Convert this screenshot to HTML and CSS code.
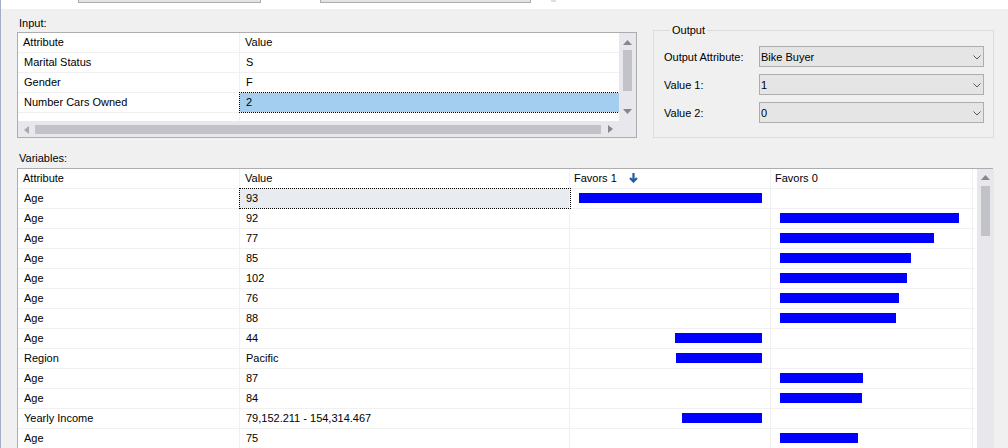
FILE: index.html
```html
<!DOCTYPE html>
<html>
<head>
<meta charset="utf-8">
<link rel="stylesheet" href="styles.css">
</head>
<body>
<div class="window">
  <div class="topbar">
    <div class="stub stub-a"></div>
    <div class="stub stub-b"></div>
    <div class="stub-c"></div>
  </div>

  <div class="upper">
    <section class="input-section">
      <div class="caption">Input:</div>
      <div class="grid-box input-box">
        <div class="grid-body">
          <div class="row head"><div class="cell c-attr">Attribute</div><div class="cell c-val">Value</div></div>
          <div class="row"><div class="cell c-attr">Marital Status</div><div class="cell c-val">S</div></div>
          <div class="row"><div class="cell c-attr">Gender</div><div class="cell c-val">F</div></div>
          <div class="row"><div class="cell c-attr">Number Cars Owned</div><div class="cell c-val sel-blue">2</div></div>
          <div class="row filler"><div class="cell c-attr"></div><div class="cell c-val"></div></div>
        </div>
        <div class="vscroll">
          <svg class="arr-up" width="9" height="5" viewBox="0 0 9 5"><polygon points="0,5 4.5,0 9,5" fill="#86868f"/></svg>
          <div class="thumb v-thumb-in"></div>
          <svg class="arr-down" width="9" height="5" viewBox="0 0 9 5"><polygon points="0,0 9,0 4.5,5" fill="#86868f"/></svg>
        </div>
        <div class="hscroll">
          <svg class="arr-left" width="5" height="8" viewBox="0 0 5 8"><polygon points="5,0 5,8 0,4" fill="#a8a8b0"/></svg>
          <div class="thumb h-thumb"></div>
          <svg class="arr-right" width="5" height="8" viewBox="0 0 5 8"><polygon points="0,0 0,8 5,4" fill="#86868f"/></svg>
        </div>
      </div>
    </section>

    <fieldset class="output">
      <legend>Output</legend>
      <div class="out-row">
        <div class="out-label">Output Attribute:</div>
        <div class="combo"><span>Bike Buyer</span><svg width="8" height="5" viewBox="0 0 8 5"><polyline points="0.5,0.5 4,4 7.5,0.5" fill="none" stroke="#5a5a5a" stroke-width="1"/></svg></div>
      </div>
      <div class="out-row">
        <div class="out-label">Value 1:</div>
        <div class="combo"><span>1</span><svg width="8" height="5" viewBox="0 0 8 5"><polyline points="0.5,0.5 4,4 7.5,0.5" fill="none" stroke="#5a5a5a" stroke-width="1"/></svg></div>
      </div>
      <div class="out-row">
        <div class="out-label">Value 2:</div>
        <div class="combo"><span>0</span><svg width="8" height="5" viewBox="0 0 8 5"><polyline points="0.5,0.5 4,4 7.5,0.5" fill="none" stroke="#5a5a5a" stroke-width="1"/></svg></div>
      </div>
    </fieldset>
  </div>

  <section class="variables">
    <div class="caption">Variables:</div>
    <div class="grid-box var-box">
      <div class="var-body">
        <div class="row head">
          <div class="cell c-attr">Attribute</div>
          <div class="cell c-val">Value</div>
          <div class="cell c-f1 hdr-f1">Favors 1<svg class="sort-ico" width="9" height="10" viewBox="0 0 9 10"><path d="M4.5 0 V8.5 M1 5 L4.5 8.5 L8 5" fill="none" stroke="#1d5ba6" stroke-width="2.2"/></svg></div>
          <div class="cell c-f0">Favors 0</div>
        </div>
        <div class="row"><div class="cell c-attr">Age</div><div class="cell c-val sel-gray">93</div><div class="cell c-f1"><div class="bar" style="width:183px"></div></div><div class="cell c-f0"></div></div>
        <div class="row"><div class="cell c-attr">Age</div><div class="cell c-val">92</div><div class="cell c-f1"></div><div class="cell c-f0"><div class="bar" style="width:179px"></div></div></div>
        <div class="row"><div class="cell c-attr">Age</div><div class="cell c-val">77</div><div class="cell c-f1"></div><div class="cell c-f0"><div class="bar" style="width:154px"></div></div></div>
        <div class="row"><div class="cell c-attr">Age</div><div class="cell c-val">85</div><div class="cell c-f1"></div><div class="cell c-f0"><div class="bar" style="width:131px"></div></div></div>
        <div class="row"><div class="cell c-attr">Age</div><div class="cell c-val">102</div><div class="cell c-f1"></div><div class="cell c-f0"><div class="bar" style="width:127px"></div></div></div>
        <div class="row"><div class="cell c-attr">Age</div><div class="cell c-val">76</div><div class="cell c-f1"></div><div class="cell c-f0"><div class="bar" style="width:119px"></div></div></div>
        <div class="row"><div class="cell c-attr">Age</div><div class="cell c-val">88</div><div class="cell c-f1"></div><div class="cell c-f0"><div class="bar" style="width:116px"></div></div></div>
        <div class="row"><div class="cell c-attr">Age</div><div class="cell c-val">44</div><div class="cell c-f1"><div class="bar" style="width:87px"></div></div><div class="cell c-f0"></div></div>
        <div class="row"><div class="cell c-attr">Region</div><div class="cell c-val">Pacific</div><div class="cell c-f1"><div class="bar" style="width:86px"></div></div><div class="cell c-f0"></div></div>
        <div class="row"><div class="cell c-attr">Age</div><div class="cell c-val">87</div><div class="cell c-f1"></div><div class="cell c-f0"><div class="bar" style="width:83px"></div></div></div>
        <div class="row"><div class="cell c-attr">Age</div><div class="cell c-val">84</div><div class="cell c-f1"></div><div class="cell c-f0"><div class="bar" style="width:82px"></div></div></div>
        <div class="row"><div class="cell c-attr">Yearly Income</div><div class="cell c-val">79,152.211 - 154,314.467</div><div class="cell c-f1"><div class="bar" style="width:80px"></div></div><div class="cell c-f0"></div></div>
        <div class="row"><div class="cell c-attr">Age</div><div class="cell c-val">75</div><div class="cell c-f1"></div><div class="cell c-f0"><div class="bar" style="width:78px"></div></div></div>
      </div>
      <div class="var-scroll">
        <svg class="arr-up2" width="9" height="5" viewBox="0 0 9 5"><polygon points="0,5 4.5,0 9,5" fill="#86868f"/></svg>
        <div class="thumb v-thumb-var"></div>
      </div>
    </div>
  </section>
</div>
</body>
</html>
```

FILE: styles.css
```css
* { box-sizing: border-box; }
html, body { margin: 0; padding: 0; }
body {
  width: 1008px;
  height: 448px;
  overflow: hidden;
  background: #f0f0f0;
  font-family: "Liberation Sans", Arial, sans-serif;
  font-size: 11px;
  color: #000;
}
.window {
  height: 448px;
  border-left: 1px solid #a5adc9;
  overflow: hidden;
}

/* top strip */
.topbar {
  height: 9px;
  background: #fff;
  display: flex;
  align-items: flex-start;
  padding-left: 77px;
}
.stub {
  height: 3px;
  border: 1px solid #adadad;
  border-top: none;
  background: #e3e3e3;
}
.stub-a { width: 183px; }
.stub-b { width: 211px; margin-left: 59px; }
.stub-c { width: 5px; height: 2px; background: #dedede; margin-left: 20px; }

/* upper area */
.upper {
  display: flex;
  align-items: flex-start;
  padding-left: 16px;
}
.input-section {
  width: 620px;
  padding-top: 7px;
}
.caption {
  line-height: 15px;
  padding-left: 2px;
}
.input-section .caption { margin-bottom: 1px; }

.grid-box {
  border: 1px solid #adadad;
  background: #fff;
}
.input-box {
  display: grid;
  grid-template-columns: 1fr 17px;
  grid-template-rows: 88px 16px;
  height: 106px;
}
.input-box .grid-body { grid-column: 1; grid-row: 1; overflow: hidden; }
.input-box .vscroll { grid-column: 2; grid-row: 1 / 3; }
.input-box .hscroll { grid-column: 1; grid-row: 2; }

.row {
  display: flex;
  height: 20px;
  border-bottom: 1px solid #f0f0f0;
  line-height: 19px;
}
.row.filler { height: 8px; border-bottom: none; }
.cell {
  padding-left: 6px;
  white-space: nowrap;
  overflow: visible;
}
.head .cell { padding-left: 5px; }
.c-attr { width: 222px; flex: none; border-right: 1px solid #f0f0f0; }
.input-box .c-val { flex: 1; }

.sel-blue {
  background: #a4cef0;
  outline: 1px dotted #000;
}
.sel-gray {
  background: #e8ecf0;
  outline: 1px dotted #000;
}

/* scrollbars */
.vscroll, .hscroll, .var-scroll { background: #e8e8ec; }
.vscroll {
  display: flex;
  flex-direction: column;
  padding-left: 4px;
}
.thumb { background: #c2c3c9; }
.arr-up { display: block; margin-top: 7px; }
.v-thumb-in { width: 9px; height: 41px; margin-top: 5px; }
.arr-down { display: block; margin-top: 18px; }

.hscroll {
  display: flex;
  align-items: flex-start;
  padding-left: 6px;
}
.arr-left { display: block; margin-top: 5px; }
.h-thumb { width: 566px; height: 9px; margin-top: 4px; margin-left: 6px; }
.arr-right { display: block; margin-top: 4px; margin-left: 7px; }

/* output group */
.output {
  margin: 15px 0 0 16px;
  width: 341px;
  min-width: 0;
  border: 1px solid #dcdcdc;
  padding: 9px 9px 14px 10px;
}
.output legend {
  padding: 0 2px;
  margin-left: 6px;
  line-height: 13px;
}
.out-row {
  display: flex;
  height: 21px;
}
.out-row + .out-row { margin-top: 7px; }
.out-label {
  width: 95px;
  line-height: 22px;
}
.combo {
  width: 225px;
  height: 21px;
  border: 1px solid #adadad;
  background: #e5e5e5;
  display: flex;
  align-items: center;
  justify-content: space-between;
  padding: 1px 2px 0 1px;
  line-height: 19px;
}
.combo svg { display: block; }

/* variables */
.variables {
  padding-left: 16px;
  margin-top: 13px;
}
.variables .caption { margin-bottom: 2px; }
.var-box {
  width: 976px;
  height: 300px;
  display: flex;
}
.var-body { width: 957px; flex: none; }
.var-body .c-val { width: 330px; flex: none; border-right: 1px solid #f0f0f0; }
.c-f1 {
  width: 201px;
  flex: none;
  border-right: 1px solid #f0f0f0;
  display: flex;
  justify-content: flex-end;
  padding-right: 8px;
}
.c-f0 {
  width: 202px;
  flex: none;
  border-right: 1px solid #f0f0f0;
  padding-left: 9px;
}
.head .c-f1, .head .c-f0 { padding-left: 4px; }
.hdr-f1 { justify-content: flex-start; align-items: flex-start; }
.sort-ico { display: block; margin-left: 12px; margin-top: 4px; }
.bar {
  height: 10px;
  margin-top: 4px;
  background: #0000ff;
}
.var-scroll {
  width: 17px;
  flex: none;
  margin-left: 2px;
  padding-left: 4px;
}
.arr-up2 { display: block; margin-top: 6px; }
.v-thumb-var { width: 9px; height: 50px; margin-top: 6px; }
```
